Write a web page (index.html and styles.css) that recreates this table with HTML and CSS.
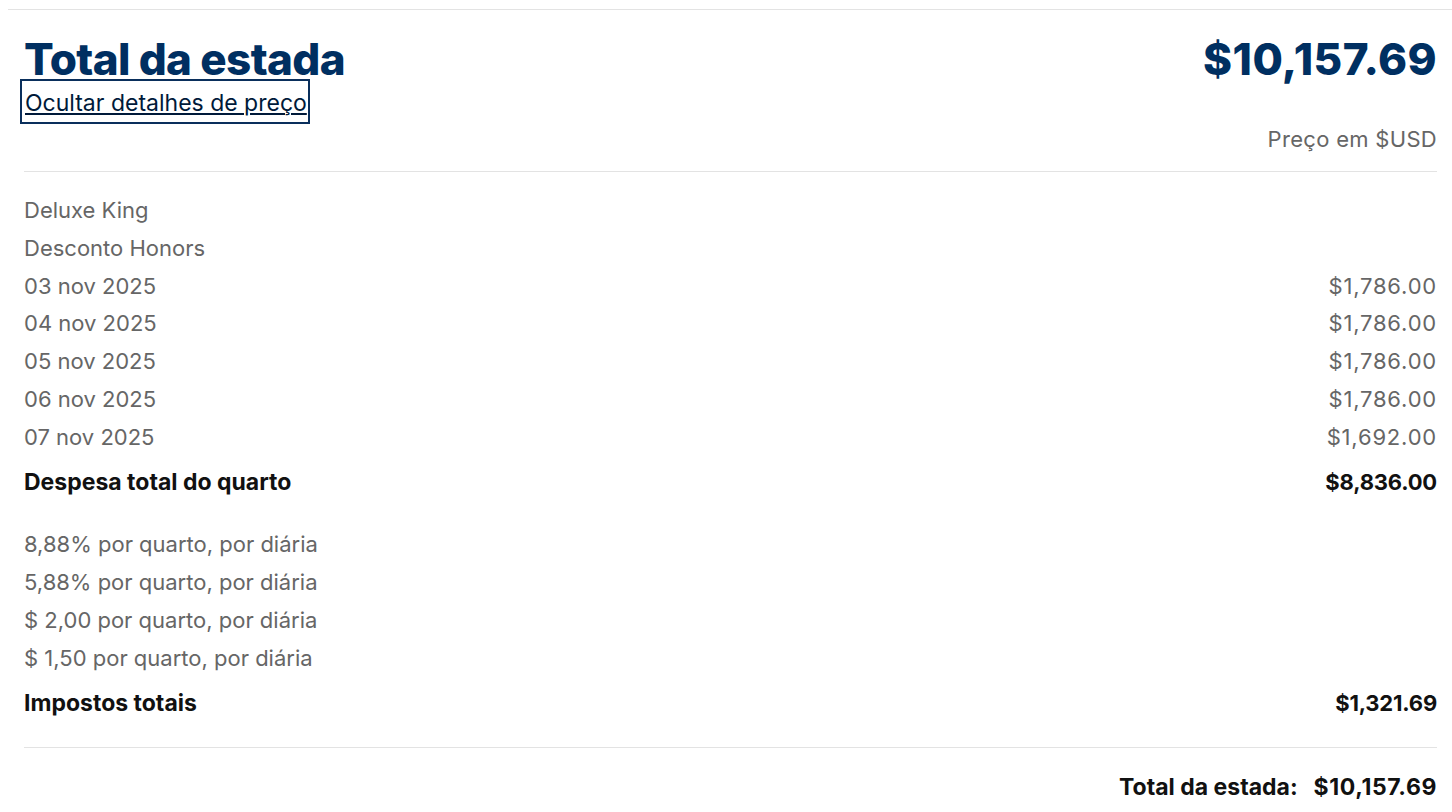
FILE: index.html
```html
<!DOCTYPE html>
<html lang="pt">
<head>
<meta charset="utf-8">
<title>Total da estada</title>
<link rel="stylesheet" href="styles.css">
</head>
<body>
<div class="page">
  <section class="summary">
    <div class="summary-head">
      <div class="summary-left">
        <h2 class="title">Total da estada</h2>
        <a class="toggle" href="#">Ocultar detalhes de preço</a>
      </div>
      <div class="summary-right">
        <div class="big-price">$10,157.69</div>
        <div class="currency">Preço em $USD</div>
      </div>
    </div>
  </section>
  <section class="details">
    <div class="group">
      <div class="row"><span>Deluxe King</span></div>
      <div class="row"><span>Desconto Honors</span></div>
      <div class="row"><span>03 nov 2025</span><span class="amt">$1,786.00</span></div>
      <div class="row"><span>04 nov 2025</span><span class="amt">$1,786.00</span></div>
      <div class="row"><span>05 nov 2025</span><span class="amt">$1,786.00</span></div>
      <div class="row"><span>06 nov 2025</span><span class="amt">$1,786.00</span></div>
      <div class="row"><span>07 nov 2025</span><span class="amt">$1,692.00</span></div>
      <div class="row total"><span>Despesa total do quarto</span><span class="amt">$8,836.00</span></div>
    </div>
    <div class="group taxes">
      <div class="row"><span>8,88% por quarto, por diária</span></div>
      <div class="row"><span>5,88% por quarto, por diária</span></div>
      <div class="row"><span>$ 2,00 por quarto, por diária</span></div>
      <div class="row"><span>$ 1,50 por quarto, por diária</span></div>
      <div class="row total"><span>Impostos totais</span><span class="amt">$1,321.69</span></div>
    </div>
    <div class="grand">
      <span>Total da estada:</span><span class="amt">$10,157.69</span>
    </div>
  </section>
</div>
</body>
</html>
```

FILE: styles.css
```css
* { box-sizing: border-box; }
html, body { margin: 0; padding: 0; background: #fff; }
body {
  font-family: Inter, "Noto Sans", "Liberation Sans", sans-serif;
  color: #666;
}
.page {
  margin: 9px 0 0 8px;
  border-top: 1px solid #e3e3e3;
}
.summary {
  padding: 0 15px 0 16px;
}
.summary-head {
  display: flex;
  justify-content: space-between;
  align-items: flex-start;
  padding-top: 25px;
  padding-bottom: 19px;
  border-bottom: 1px solid #e3e3e3;
}
.summary-left {
  display: flex;
  flex-direction: column;
  align-items: flex-start;
}
.title {
  margin: 0;
  font-size: 44px;
  line-height: 48px;
  font-weight: 800;
  letter-spacing: -0.65px;
  color: #002f61;
}
.toggle {
  display: inline-block;
  margin: -4px 0 0 -4px;
  padding: 8px 1px 4px 3px;
  border: 2px solid #0a2f5c;
  font-size: 23px;
  line-height: 29px;
  color: #001a3a;
  text-decoration: underline;
  text-underline-offset: 2px;
  text-decoration-thickness: 2px;
}
.summary-right {
  display: flex;
  flex-direction: column;
  align-items: flex-end;
}
.big-price {
  font-size: 44px;
  line-height: 48px;
  font-weight: 800;
  letter-spacing: 0.4px;
  color: #002f61;
}
.currency {
  margin-top: 43px;
  font-size: 22px;
  line-height: 26px;
  letter-spacing: 0.3px;
  color: #666;
}
.details {
  padding: 20px 15px 0 16px;
}
.group {
  display: flex;
  flex-direction: column;
}
.row {
  display: flex;
  justify-content: space-between;
  font-size: 22px;
  line-height: 37.8px;
  color: #666;
}
.row .amt {
  letter-spacing: 0.8px;
}
.row.total {
  margin-top: 7px;
  font-size: 23px;
  font-weight: 700;
  color: #111;
}
.row.total .amt {
  font-size: 22px;
  letter-spacing: -0.2px;
}
.taxes {
  margin-top: 25px;
}
.taxes .row.total {
  margin-top: 7px;
}
.grand {
  margin-top: 25px;
  padding-top: 21px;
  border-top: 1px solid #e3e3e3;
  display: flex;
  justify-content: flex-end;
  gap: 16px;
  font-size: 23px;
  line-height: 37.8px;
  font-weight: 700;
  color: #111;
}
.grand .amt {
  letter-spacing: 0.6px;
}
```
